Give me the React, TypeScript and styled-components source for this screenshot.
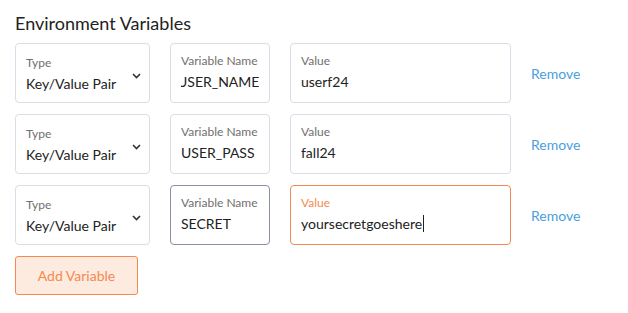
import React, { useEffect, useRef } from "react";
import styled, { createGlobalStyle, css } from "styled-components";

const GlobalStyle = createGlobalStyle`
  html, body {
    margin: 0;
    padding: 0;
    background: #ffffff;
    font-family: Lato, "Open Sans", sans-serif;
    color: #222222;
  }
`;

type Tone = "idle" | "hover" | "active";

const Page = styled.div`
  padding: 12px 15px;
`;

const Title = styled.h2`
  margin: 0 0 9px;
  font-size: 18px;
  line-height: 22px;
  font-weight: 400;
  color: #222;
`;

const Rows = styled.div`
  display: flex;
  flex-direction: column;
  gap: 11px;
`;

const Row = styled.div`
  display: flex;
  align-items: center;
  gap: 20px;
`;

const Field = styled.label<{ $width: number; $top: number; $tone?: Tone }>`
  position: relative;
  box-sizing: border-box;
  width: ${(p) => p.$width}px;
  height: 60px;
  padding: ${(p) => p.$top}px 10px 0;
  border: 1px solid #dcdce6;
  border-radius: 4px;
  background: #fff;
  display: flex;
  flex-direction: column;
  gap: 5px;

  ${(p) =>
    p.$tone === "hover" &&
    css`
      border-color: #8a90a8;
    `}
  ${(p) =>
    p.$tone === "active" &&
    css`
      border-color: #f5894f;
    `}
`;

const Label = styled.span<{ $tone?: Tone }>`
  font-size: 12px;
  line-height: 14px;
  color: ${(p) => (p.$tone === "active" ? "#f5894f" : "#6f6f6f")};
`;

const Input = styled.input`
  border: none;
  outline: none;
  padding: 0;
  margin: 0;
  width: 100%;
  background: transparent;
  font-family: inherit;
  font-size: 14px;
  line-height: 18px;
  height: 18px;
  color: #222;
  caret-color: #222;
`;

const SelectText = styled.span`
  font-size: 14px;
  line-height: 18px;
  color: #222;
  white-space: nowrap;
`;

const Chevron = styled.svg`
  position: absolute;
  right: 8px;
  top: 29px;
`;

const Caret = styled.span`
  display: inline-block;
  width: 1px;
  height: 17px;
  margin-left: 1px;
  vertical-align: top;
  background: #222;
`;

const RemoveLink = styled.button`
  border: none;
  background: none;
  padding: 0;
  font-family: inherit;
  font-size: 14px;
  color: #4aa0dc;
  cursor: pointer;
`;

const AddButton = styled.button`
  margin-top: 11px;
  width: 123px;
  height: 39px;
  box-sizing: border-box;
  border: 1px solid #f5894f;
  border-radius: 3px;
  background: #fdebe0;
  color: #f5894f;
  font-family: inherit;
  font-size: 14px;
`;

type Variable = { name: string; value: string; nameTone?: Tone; valueTone?: Tone };

const vars: Variable[] = [
  { name: "USER_NAME", value: "userf24" },
  { name: "USER_PASS", value: "fall24" },
  { name: "SECRET", value: "yoursecretgoeshere", nameTone: "hover", valueTone: "active" },
];

const ScrolledInput = ({ value }: { value: string }) => {
  const ref = useRef<HTMLInputElement>(null);
  useEffect(() => {
    if (ref.current) ref.current.scrollLeft = ref.current.scrollWidth;
  }, []);
  return <Input ref={ref} defaultValue={value} />;
};

const VariableRow = ({ v }: { v: Variable }) => (
  <Row>
    <Field $width={135} $top={12}>
      <Label>Type</Label>
      <SelectText>Key/Value Pair</SelectText>
      <Chevron width="9" height="6" viewBox="0 0 9 6">
        <path d="M1 1l3.5 3.5L8 1" fill="none" stroke="#333" strokeWidth="1.6" />
      </Chevron>
    </Field>
    <Field $width={100} $top={10} $tone={v.nameTone}>
      <Label $tone={v.nameTone}>Variable Name</Label>
      <ScrolledInput value={v.name} />
    </Field>
    <Field $width={221} $top={10} $tone={v.valueTone}>
      <Label $tone={v.valueTone}>Value</Label>
      {v.valueTone === "active" ? (
        <SelectText>
          {v.value}
          <Caret />
        </SelectText>
      ) : (
        <ScrolledInput value={v.value} />
      )}
    </Field>
    <RemoveLink>Remove</RemoveLink>
  </Row>
);

export default function App() {
  return (
    <>
      <GlobalStyle />
      <Page>
        <Title>Environment Variables</Title>
        <Rows>
          {vars.map((v) => (
            <VariableRow key={v.name} v={v} />
          ))}
        </Rows>
        <AddButton>Add Variable</AddButton>
      </Page>
    </>
  );
}
